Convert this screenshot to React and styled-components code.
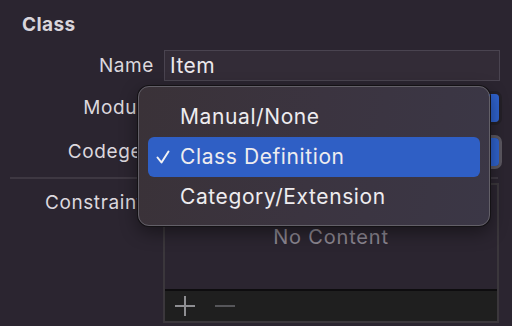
import React from "react";
import styled, { createGlobalStyle } from "styled-components";

const GlobalStyle = createGlobalStyle`
  html, body {
    margin: 0;
    padding: 0;
    background: #2b2530;
  }
  body {
    font-family: "Inter", "Noto Sans", sans-serif;
    -webkit-font-smoothing: antialiased;
  }
`;

const Page = styled.div`
  position: relative;
  width: 512px;
  height: 326px;
  overflow: hidden;
  background: #2b2530;
  color: #dedae0;
`;

const SectionTitle = styled.div`
  padding: 13px 0 0 22px;
  height: 37px;
  box-sizing: border-box;
  font-size: 19px;
  font-weight: 700;
  letter-spacing: 0.4px;
  color: #d9d5db;
`;

const FormGrid = styled.div`
  display: grid;
  grid-template-columns: 154px 336px;
  column-gap: 10px;
  row-gap: 10px;
  padding-top: 13px;
`;

const Label = styled.div`
  text-align: right;
  font-size: 19px;
  letter-spacing: 0.6px;
  line-height: ${(p) => p.$h || 32}px;
  color: #dcd8de;
  white-space: nowrap;
`;

const TextField = styled.div`
  height: 31px;
  box-sizing: border-box;
  border: 1px solid #4a4450;
  background: #332c37;
  padding-left: 5px;
  font-size: 21px;
  letter-spacing: 0.5px;
  line-height: 29px;
  color: #ebe8ec;
`;

const Popup = styled.div`
  height: 34px;
  box-sizing: border-box;
  border-radius: 7px;
  border: 3px solid ${(p) => (p.$focused ? "#5b5760" : "#242027")};
  background: #3f3945;
  display: flex;
  justify-content: flex-end;
  margin-right: -2px;
`;

const PopupCap = styled.div`
  width: 22px;
  border-radius: 4px;
  background: #2f62cc;
`;

const Divider = styled.div`
  height: 2px;
  background: #3e3842;
  margin: 8px 14px 0 10px;
`;

const ConstraintsRow = styled.div`
  display: grid;
  grid-template-columns: 154px 336px;
  column-gap: 9px;
  padding-top: 4px;
`;

const Table = styled.div`
  height: 140px;
  box-sizing: border-box;
  border: 2px solid #3b373c;
  display: flex;
  flex-direction: column;
`;

const TableBody = styled.div`
  flex: 1;
  display: flex;
  justify-content: center;
  padding-top: 40px;
  font-size: 20px;
  letter-spacing: 0.8px;
  color: #8b8690;
  border-bottom: 2px solid #0e0d0f;
`;

const TableBar = styled.div`
  height: 30px;
  background: #1f1f1f;
  display: flex;
  align-items: center;
  gap: 18px;
  padding-left: 9px;
`;

const BarButton = styled.svg`
  width: 22px;
  height: 22px;
  stroke: ${(p) => (p.$disabled ? "#56565a" : "#8e8e92")};
  stroke-width: 2;
`;

const Menu = styled.div`
  position: absolute;
  left: 138px;
  top: 86px;
  width: 352px;
  height: 140px;
  box-sizing: border-box;
  padding: 10px 9px;
  border-radius: 11px;
  background: linear-gradient(100deg, #3a3238 0%, #3b3440 50%, #3b3746 100%);
  border: 1px solid #636068;
  box-shadow: 0 0 0 1px #141215, 0 6px 18px rgba(0, 0, 0, 0.45);
`;

const MenuItem = styled.div`
  position: relative;
  height: 40px;
  border-radius: 6px;
  padding-left: 32px;
  font-size: 21px;
  letter-spacing: 0.6px;
  line-height: 40px;
  color: #eeecef;
  background: ${(p) => (p.$selected ? "#2f5fc5" : "transparent")};
`;

const Check = styled.svg`
  position: absolute;
  left: 8px;
  top: 13px;
  width: 14px;
  height: 14px;
  fill: none;
  stroke: #f2f2f4;
  stroke-width: 2;
  stroke-linecap: round;
  stroke-linejoin: round;
`;

function Plus() {
  return (
    <BarButton viewBox="0 0 22 22">
      <path d="M11 1v20M1 11h20" />
    </BarButton>
  );
}

function Minus() {
  return (
    <BarButton viewBox="0 0 22 22" $disabled>
      <path d="M1 11h20" />
    </BarButton>
  );
}

export default function App() {
  return (
    <Page>
      <GlobalStyle />
      <SectionTitle>Class</SectionTitle>
      <FormGrid>
        <Label $h={31}>Name</Label>
        <TextField>Item</TextField>
        <Label $h={34}>Module</Label>
        <Popup>
          <PopupCap />
        </Popup>
        <Label $h={34}>Codegen</Label>
        <Popup $focused>
          <PopupCap />
        </Popup>
      </FormGrid>
      <Divider />
      <ConstraintsRow>
        <Label $h={40}>Constraints</Label>
        <Table>
          <TableBody>No Content</TableBody>
          <TableBar>
            <Plus />
            <Minus />
          </TableBar>
        </Table>
      </ConstraintsRow>

      <Menu>
        <MenuItem>Manual/None</MenuItem>
        <MenuItem $selected>
          <Check viewBox="0 0 14 14">
            <path d="M1.5 7.5l4 5L12.5 1.5" />
          </Check>
          Class Definition
        </MenuItem>
        <MenuItem>Category/Extension</MenuItem>
      </Menu>
    </Page>
  );
}
